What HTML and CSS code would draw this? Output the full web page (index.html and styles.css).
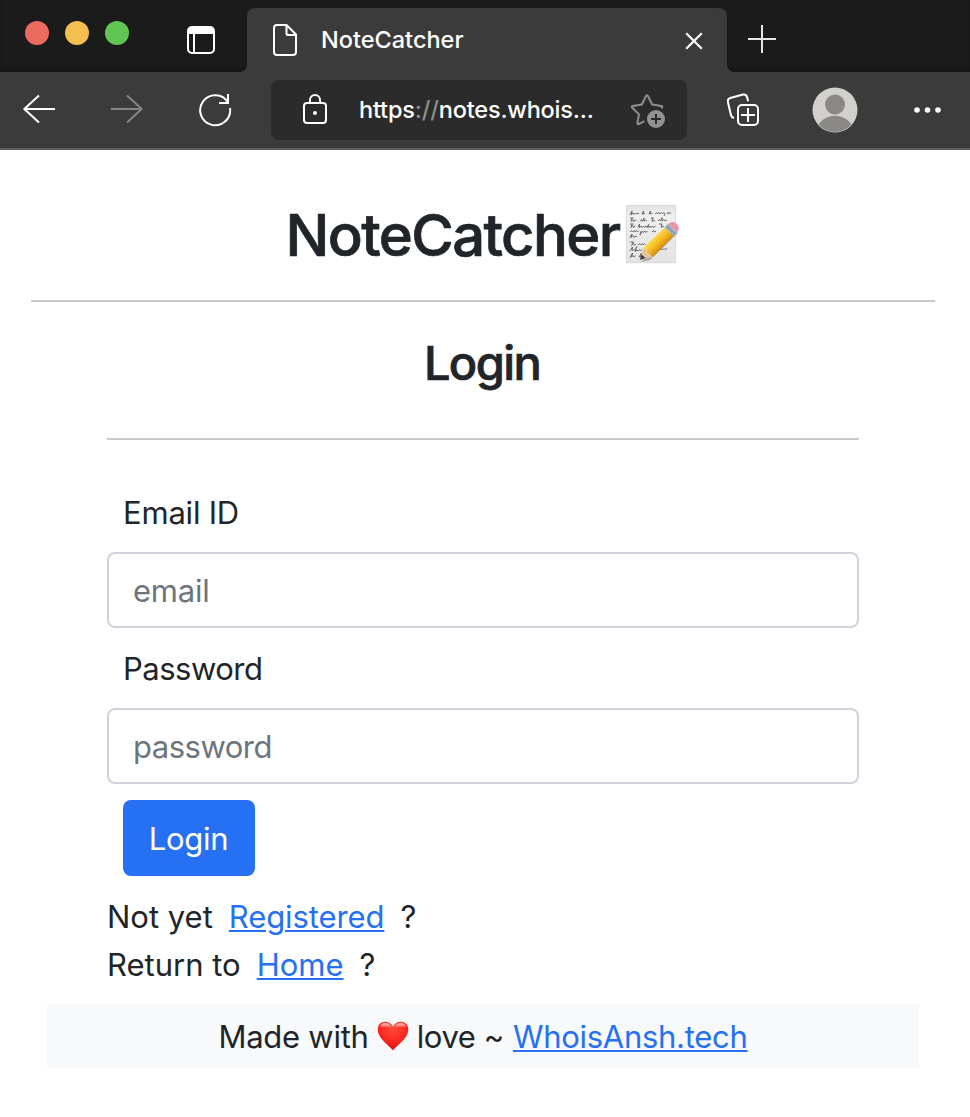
FILE: index.html
```html
<!DOCTYPE html>
<html lang="en">
<head>
<meta charset="utf-8">
<title>NoteCatcher</title>
<link rel="stylesheet" href="styles.css">
</head>
<body>
<header class="browser">
  <div class="tabstrip">
    <div class="strip-left">
      <div class="lights"><i class="light red"></i><i class="light amber"></i><i class="light green"></i></div>
      <svg class="tab-actions" width="28" height="28" viewBox="0 0 28 28"><rect x="1" y="1" width="26" height="26" rx="4" fill="none" stroke="#fff" stroke-width="2"/><path d="M1 8V5a4 4 0 0 1 4-4h18a4 4 0 0 1 4 4v3z" fill="#fff"/><path d="M7 8v19" stroke="#fff" stroke-width="2"/></svg>
    </div>
    <div class="tab">
      <svg class="page-icon" width="24" height="32" viewBox="0 0 24 32" fill="none" stroke="#fff" stroke-width="2" stroke-linejoin="round"><path d="M13.500 1H4a3 3 0 0 0-3 3v24a3 3 0 0 0 3 3h16a3 3 0 0 0 3-3V10.500z"/><path d="M13.500 1v8.500a1.500 1.500 0 0 0 1.500 1.500h8"/></svg>
      <span class="tab-title">NoteCatcher</span>
      <svg class="tab-close" width="18" height="18" viewBox="0 0 18 18"><path d="M1.200 1.200l15.600 15.600M16.800 1.200L1.200 16.800" stroke="#fff" stroke-width="2.200"/></svg>
    </div>
    <div class="strip-right">
      <svg class="new-tab" width="28" height="28" viewBox="0 0 28 28"><path d="M14 0v28M0 14h28" stroke="#e6e6e6" stroke-width="2"/></svg>
    </div>
  </div>
  <div class="toolbar">
    <svg class="back" width="32" height="30" viewBox="0 0 32 30" fill="none" stroke="#fff" stroke-width="2" stroke-linejoin="round"><path d="M32 15H1.500M16 1.500L1.300 15 16 28.500"/></svg>
    <svg class="forward" width="32" height="30" viewBox="0 0 32 30" fill="none" stroke="#858585" stroke-width="2" stroke-linejoin="round"><path d="M0 15h30.500M16 1.500L30.700 15 16 28.500"/></svg>
    <svg class="reload" width="34" height="34" viewBox="0 0 34 34" fill="none" stroke="#fff" stroke-width="2"><path d="M32 15a15 15 0 1 1-2-5.500"/><path d="M30 1v9h-9"/></svg>
    <div class="address">
      <svg class="lock" width="24" height="30" viewBox="0 0 24 30" fill="none" stroke="#fff" stroke-width="2"><rect x="1" y="9" width="22" height="20" rx="3"/><path d="M7 9V6a5 5 0 0 1 10 0v3"/><circle cx="12" cy="19" r="2" fill="#fff" stroke="none"/></svg>
      <span class="url">https<span class="dim">://</span>notes.whois...</span>
      <svg class="star" width="36" height="34" viewBox="0 0 36 34"><path d="M14.500 27.200L8.800 30q-1.500.7-1.400-1.100l1.600-8.600L2 13.500q-.8-1.200.7-1.600l9.100-1.400L16 2q1-1.400 2 0l4.200 8.500 9.100 1.400q1.500.4.700 1.600l-.7 1" fill="none" stroke="#8d8d8d" stroke-width="2"/><circle cx="26" cy="25" r="9" fill="#929292"/><path d="M26 20v10M21 25h10" stroke="#2b2b2b" stroke-width="2"/></svg>
    </div>
    <svg class="collections" width="34" height="34" viewBox="0 0 34 34" fill="none" stroke="#fff" stroke-width="2"><path d="M7 25Q4.500 24.500 4 22.300L.9 9q-.6-3 2.400-4L16 1.500q3-.6 4 2.400l1.200 4.300"/><rect x="11" y="12" width="20" height="20" rx="4"/><path d="M21 15v14M14 22h14"/></svg>
    <svg class="avatar" width="46" height="46" viewBox="0 0 46 46"><clipPath id="face"><circle cx="23" cy="23" r="22"/></clipPath><circle cx="23" cy="23" r="22.500" fill="#d2d0cc"/><g clip-path="url(#face)" fill="#8a8886"><circle cx="23" cy="17.500" r="10"/><circle cx="23" cy="48.500" r="19.800"/></g></svg>
    <svg class="more" width="28" height="6" viewBox="0 0 28 6" fill="#fff"><circle cx="3" cy="3" r="2.800"/><circle cx="13.500" cy="3" r="2.800"/><circle cx="24" cy="3" r="2.800"/></svg>
  </div>
</header>
<main class="page">
  <h1 class="brand"><span class="brand-text">NoteCatcher</span><svg class="memo" width="60" height="60" viewBox="0 0 60 60">
    <defs>
      <linearGradient id="paper" x2="0" y2="1"><stop offset="0" stop-color="#e3e3e3"/><stop offset=".2" stop-color="#efefee"/><stop offset="1" stop-color="#e2e3e2"/></linearGradient>
      <linearGradient id="wood" gradientUnits="userSpaceOnUse" x1="29" y1="33" x2="39" y2="43"><stop offset="0" stop-color="#ffdf50"/><stop offset=".5" stop-color="#f6bd22"/><stop offset="1" stop-color="#d58b0d"/></linearGradient>
    </defs>
    <rect x="2.300" y="1.300" width="49" height="57.500" fill="url(#paper)" stroke="#d2d2d2" stroke-width=".7"/>
    <g fill="none" stroke="#505050" stroke-width=".8">
      <path d="M6 11l2-4-.5 3.500 1.500-1.500 1 1.500 1.500-1.500 1 1 1.500-1 1 1M18 10.500l1.500-3.500-.5 3 2-.5M25 10.500l1.500-3.500-.5 3 1.500-1 1 1M31 10l1.500-1.500 1 1.500 1.500-1.500 1 1.500 1.500-1.500 1 1 1.500-1 1 1.500-1 2M43 10l1-1.500 1 1.500 1-1.500 1 1"/>
      <path d="M6 14h3.500M8 14l-1 3.500 2-2 .5 2 2-1.500 1 1M16 17.500l1.500-2 1 2 1.500-3.500v3l1.500-1 1.500 1M27 14h3M28.500 14l-.5 3.500 2-1.500 1 1.500M34 17l1.500-1.500 1 1.500 1.500-3.500v3.500l2-1.500 1 1.500 2-1"/>
      <path d="M6 20h3.500M8 20l-1 3.500 2-2 .5 2 2-1.500M14 23.500l1.500-3.500v3.500l1.500-1.500 1 1.500 1.500-1.500 1 1.500 1.500-1.500 1 1.500 1.500-3-.5 3 2-1.500 1 1.500 1.500-1.500 1 1.500 2-1.500M35 20h3l-1 3.500 2-1.500 1 1"/>
      <path d="M6 28l1.500-1.500 1 1.500 1.500-1.500 1 1.500 1.500-1.500 1 1.500 1.500-1.500M17 27l-1 4 2.500-4 1 1.500 1.500-1.500 1 1.500 1.500-1.500M28 28l1.500-1.500 1 1.500 1.500-1M6 33.500l2-3.500-1 3.500 2-2 1 2 2-1.500 1 1"/>
      <path d="M6 38h3.500l-2 3.500 2-2 1 2 1.500-1.500M14 41l1.500-1.500 1 1.500 1.500-1.500 1 1.500 1.500-1.500 1 1"/>
      <path d="M6 47l2.500-4-.5 3.500 1.500-1 1 1 2.500-4-2 5 2-1.500 1 1 1.500-1.500 1 1.500 1.500-1.500M6 54l2.500-5-1 4 1.500-1.500 1 1.500 1.500-1.500M15 53l2.500-4-1.500 5M36 46l1.500-1.500 1 1.500 1.500-1.500 1 1 2-1"/>
    </g>
    <path d="M17 58L26 56 54 29l-4-3z" fill="#777" opacity=".55"/>
    <path d="M16 56l3.500-12L29 53z" fill="#eac291"/><path d="M16 56l1.500-5.500 4 3.500z" fill="#333b4c"/>
    <path d="M19.500 44L40.500 23.500 49.500 32 29 53l-2-3-3-1-1.500-3z" fill="url(#wood)"/>
    <path d="M40.500 23.500l4-3.800 8.500 8.500-3.500 3.800z" fill="#9db0c4"/><path d="M42.500 21.500l8.800 8.800" stroke="#75899f"/>
    <path d="M44.500 19.700q4-3.700 8.200.2t.3 8.300z" fill="#f0919f"/>
  </svg></h1>
  <hr class="rule">
  <section class="login">
    <h2 class="heading">Login</h2>
    <hr class="rule">
    <form class="form">
      <label class="label t-email" for="email">Email ID</label>
      <input class="field t-email" id="email" type="email" placeholder="email">
      <label class="label t-pass" for="password">Password</label>
      <input class="field t-pass" id="password" type="password" placeholder="password">
      <button class="submit" type="button">Login</button>
    </form>
    <p class="line"><span>Not yet</span><a class="link t-reg" href="#">Registered</a><span>?</span></p>
    <p class="line"><span>Return to</span><a class="link" href="#">Home</a><span>?</span></p>
  </section>
  <footer class="credit"><span class="t-made">Made with</span><svg class="heart" width="32" height="30" viewBox="0 0 32 30"><defs><radialGradient id="hg" cx=".5" cy=".25" r=".8"><stop offset="0" stop-color="#ff4b3c"/><stop offset=".6" stop-color="#f9231c"/><stop offset="1" stop-color="#c90e0c"/></radialGradient><linearGradient id="shine" x2="0" y2="1"><stop offset="0" stop-color="#fff" stop-opacity=".8"/><stop offset="1" stop-color="#fff" stop-opacity="0"/></linearGradient></defs><path d="M16 29.500C14 26 1 18 .7 8.800.7 3.500 4 .7 8.300.7c3.700 0 6.400 2 7.700 5 1.300-3 4-5 7.700-5 4.300 0 7.600 2.800 7.600 8.100C31 18 18 26 16 29.500z" fill="url(#hg)"/><path d="M2.500 7q1-5 5.800-5t6.500 5q-6-2-12.300 0M17.200 7q1.700-5 6.500-5t5.800 5q-6-2-12.300 0" fill="url(#shine)"/></svg><span class="t-love">love ~</span><a class="link t-site" href="#">WhoisAnsh.tech</a></footer>
</main>
</body>
</html>
```
FILE: styles.css
```css
* { box-sizing: border-box; }
body { margin: 0; background: #fff; color: #212529; font-family: Inter, sans-serif; font-size: 31px; line-height: 48px; }
svg { display: block; flex: none; }
.browser { background: #3b3b3b; height: 150px; border-bottom: 2px solid #5b5b5b; overflow: hidden; }
.tabstrip { display: flex; height: 72px; background: #3b3b3b; }
.strip-left, .strip-right { background: #1b1b1b; box-shadow: inset 0 -3px 4px -2px #111; }
.strip-left { width: 247px; display: flex; align-items: flex-start; border-bottom-right-radius: 8px; }
.lights { display: flex; gap: 16px; padding: 21px 0 0 25px; }
.light { width: 24px; height: 24px; border-radius: 50%; }
.red { background: #ed6a5e; }
.amber { background: #f5bf4f; }
.green { background: #61c554; }
.tab-actions { margin: 26px 0 0 58px; }
.tab { width: 480px; display: flex; align-items: flex-start; background: #3b3b3b; border-radius: 8px 8px 0 0; margin-top: 8px; box-shadow: 0 -8px 0 8px #1b1b1b; clip-path: inset(-8px 0 0 0); }
.page-icon { margin: 16px 0 0 26px; }
.tab-title { margin: 8px 0 0 24px; width: 361px; font-size: 23.500px; color: #fff; font-weight: 500; }
.tab-close { margin: 24px 0 0 3px; }
.strip-right { flex: 1; border-bottom-left-radius: 8px; }
.new-tab { margin: 25px 0 0 21px; }
.toolbar { display: flex; height: 76px; align-items: center; padding-left: 23px; }
.back { margin-top: -2px; }
.forward { margin: -2px 0 0 56px; }
.reload { margin-left: 55px; }
.address { display: flex; align-items: center; width: 416px; height: 60px; margin-left: 39px; padding-left: 32px; background: #2b2b2b; border-radius: 8px; }
.lock { margin-top: -2px; }
.url { width: 239px; margin-left: 32px; color: #fff; font-size: 23.500px; font-weight: 500; letter-spacing: -.18px; white-space: nowrap; }
.dim { color: #8e8e8e; }
.star { margin: 2px 0 0 32px; }
.collections { margin-left: 40px; }
.avatar { margin-left: 51px; }
.more { margin-left: 56px; }
.page { padding: 48px 35px 0 31px; }
.brand { display: flex; justify-content: center; align-items: center; height: 72px; margin: 0; font-size: 58px; line-height: 72px; font-weight: 500; }
.brand-text { padding-top: 2px; letter-spacing: -1.600px; -webkit-text-stroke: .7px currentColor; }
.memo { margin: -1px -3px 0 4px; }
.rule { height: 2px; margin: 30px 0 0; border: 0; background: #c8c9ca; }
.login { padding: 0 76px; }
.heading { margin: 0; padding: 32px 2px 0 0; height: 106px; font-size: 47px; line-height: 58px; font-weight: 500; text-align: center; letter-spacing: -1.600px; -webkit-text-stroke: .7px currentColor; }
.login .rule { margin-top: 30px; }
.form { display: flex; flex-direction: column; gap: 16px; padding-top: 48px; }
.label { display: block; height: 48px; padding: 1px 0 0 16px; }
.field { width: 100%; height: 76px; padding: 12px 24px; border: 2px solid #ced4da; border-radius: 8px; background: #fff; font: inherit; }
.t-email { letter-spacing: -.2px; }
.t-pass { letter-spacing: -.5px; }
.t-reg { letter-spacing: -.1px; }
.field::placeholder { color: #6c757d; opacity: 1; }
.submit { width: 132px; height: 76px; margin-left: 16px; padding: 2px 1px 0 0; border: 0; border-radius: 8px; background: #2670f4; color: #fff; font: inherit; letter-spacing: -.3px; }
.line { display: flex; gap: 16px; height: 48px; margin: 0; padding-top: 1px; }
.form + .line { margin-top: 16px; }
.link { color: #2670f4; text-decoration: underline; text-decoration-thickness: 2px; text-underline-offset: 2px; }
.credit { display: flex; justify-content: center; align-items: center; height: 64px; margin: 16px 16px 0; padding-top: 2px; background: #f8f9fa; }
.heart { margin: -2px 8px 0; }
.t-made { letter-spacing: -.25px; }
.t-love { margin-right: 9px; letter-spacing: -.4px; }
.t-site { letter-spacing: -.28px; }
```
